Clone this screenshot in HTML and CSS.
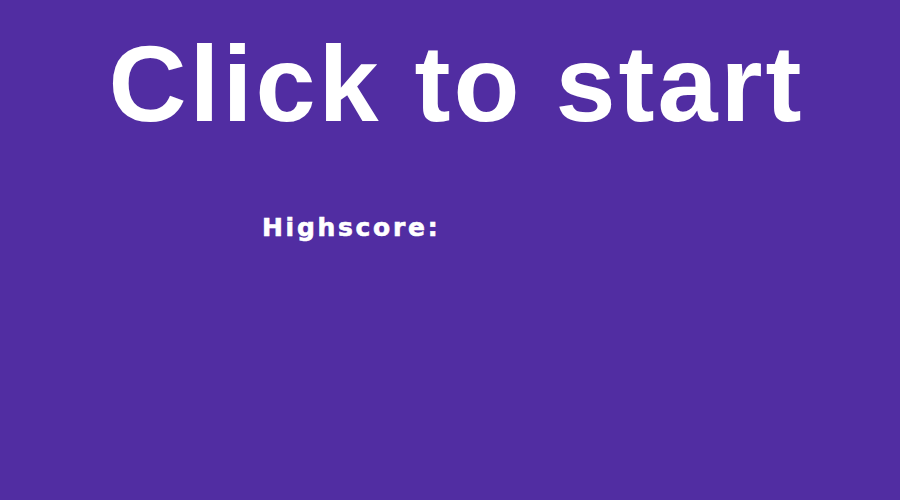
FILE: index.html
```html
<!DOCTYPE html>
<html>
<head>
<meta charset="utf-8">
<link rel="stylesheet" href="styles.css">
</head>
<body>
<main class="screen">
  <h1 class="title">Click to start</h1>
  <p class="highscore">Highscore:</p>
</main>
</body>
</html>
```
FILE: styles.css
```css
html, body {
  margin: 0;
  padding: 0;
  background: #512da2;
}
.screen {
  width: 900px;
  height: 500px;
  background: #512da2;
  color: #ffffff;
  overflow: hidden;
  display: flex;
  flex-direction: column;
}
.title {
  margin: 30px 0 0;
  padding-left: 13px;
  font-family: "Liberation Sans", Arial, sans-serif;
  font-weight: bold;
  font-size: 108px;
  line-height: 108px;
  letter-spacing: 3px;
  text-align: center;
}
.highscore {
  margin: 77px 0 0;
  padding-left: 262px;
  font-family: "DejaVu Sans", sans-serif;
  font-weight: bold;
  font-size: 25px;
  line-height: 25px;
  letter-spacing: 2.7px;
  -webkit-text-stroke: 0.6px #ffffff;
}
```
